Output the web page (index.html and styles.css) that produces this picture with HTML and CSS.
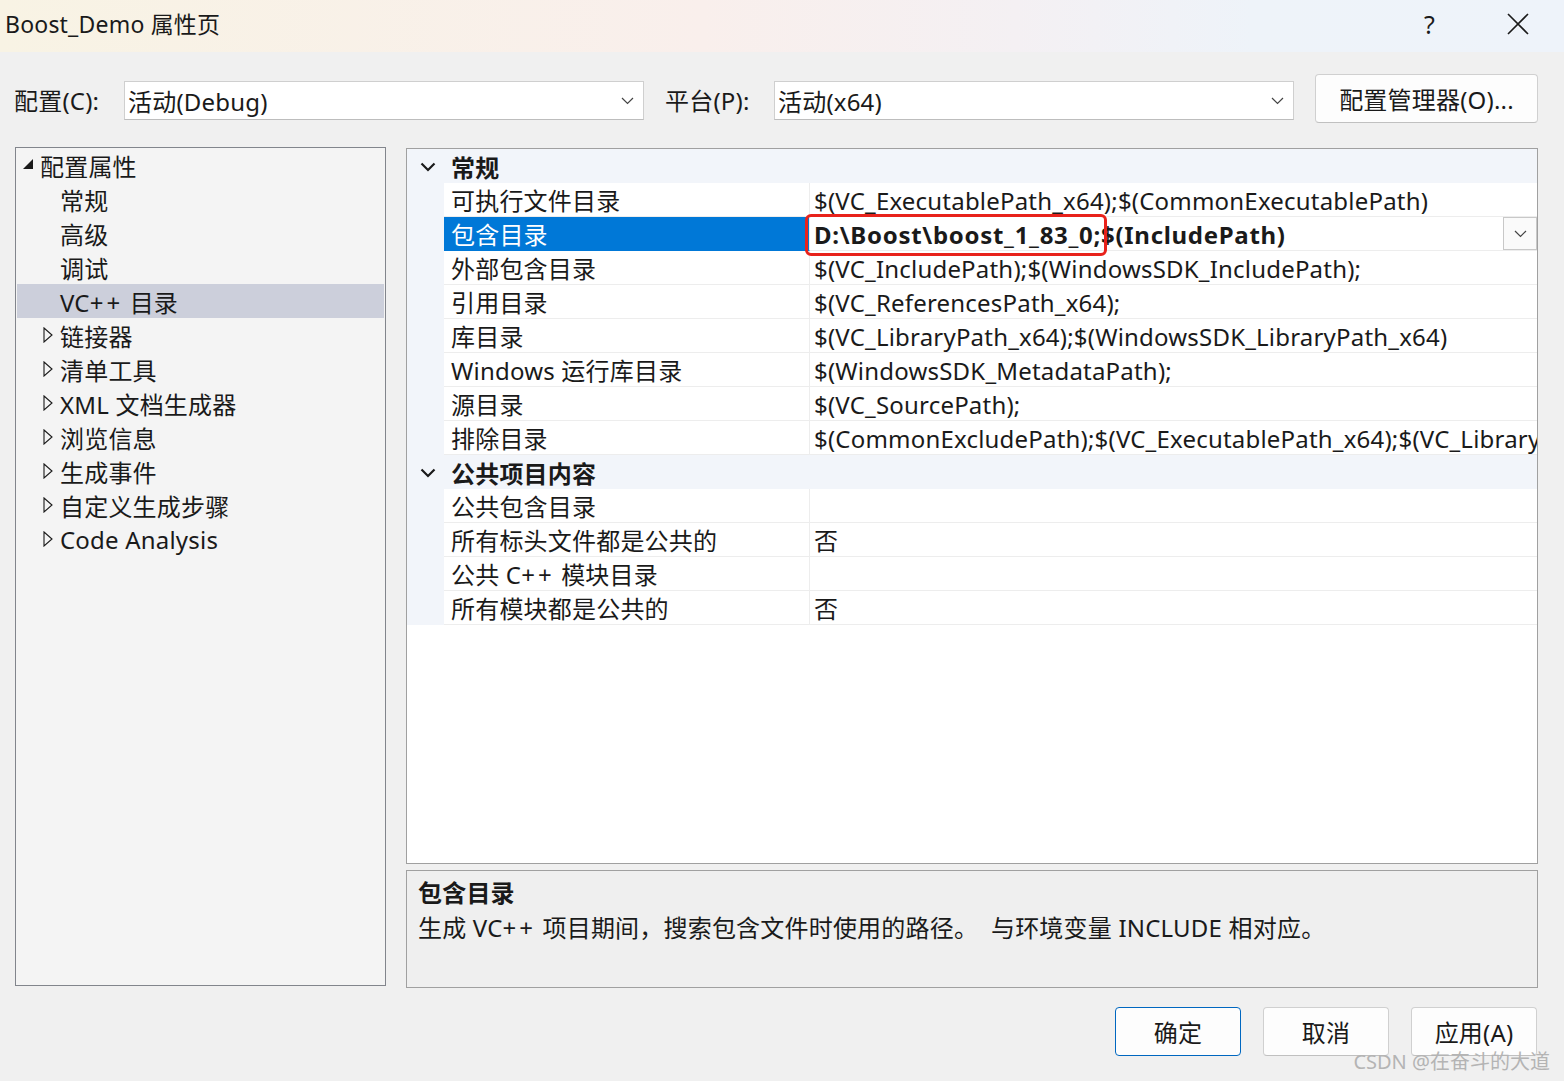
FILE: index.html
```html
<!DOCTYPE html>
<html lang="zh-CN">
<head>
<meta charset="utf-8">
<title>Boost_Demo 属性页</title>
<link rel="stylesheet" href="styles.css">
</head>
<body>
<div class="window">
  <header class="titlebar">
    <div class="title">Boost_Demo 属性页</div>
    <div class="title-actions">
      <span class="help">?</span>
      <svg class="close" width="22" height="22" viewBox="0 0 22 22"><path d="M1 1L21 21M21 1L1 21" stroke="#1a1a1a" stroke-width="1.6" fill="none"/></svg>
    </div>
  </header>

  <div class="toolbar">
    <label class="tb-label">配置(C):</label>
    <div class="combo combo-config">
      <span class="combo-text">活动(Debug)</span>
      <svg class="chev" width="13" height="8" viewBox="0 0 13 8"><path d="M1 1L6.5 6.5L12 1" stroke="#444" stroke-width="1.2" fill="none"/></svg>
    </div>
    <label class="tb-label tb-label2">平台(P):</label>
    <div class="combo combo-platform">
      <span class="combo-text">活动(x64)</span>
      <svg class="chev" width="13" height="8" viewBox="0 0 13 8"><path d="M1 1L6.5 6.5L12 1" stroke="#444" stroke-width="1.2" fill="none"/></svg>
    </div>
    <button class="btn btn-mgr">配置管理器(O)...</button>
  </div>

  <div class="main">
    <nav class="tree">
      <div class="tree-row root">
        <svg class="tri-open" width="12" height="12" viewBox="0 0 12 12"><path d="M11 1L11 11L1 11Z" fill="#1a1a1a"/></svg>
        <span>配置属性</span>
      </div>
      <div class="tree-row child"><span>常规</span></div>
      <div class="tree-row child"><span>高级</span></div>
      <div class="tree-row child"><span>调试</span></div>
      <div class="tree-row child selected"><span>VC<span class="pp">++</span> 目录</span></div>
      <div class="tree-row child"><svg class="tri" width="10" height="16" viewBox="0 0 10 16"><path d="M1 1L9 8L1 15Z" fill="none" stroke="#1a1a1a" stroke-width="1.1"/></svg><span>链接器</span></div>
      <div class="tree-row child"><svg class="tri" width="10" height="16" viewBox="0 0 10 16"><path d="M1 1L9 8L1 15Z" fill="none" stroke="#1a1a1a" stroke-width="1.1"/></svg><span>清单工具</span></div>
      <div class="tree-row child"><svg class="tri" width="10" height="16" viewBox="0 0 10 16"><path d="M1 1L9 8L1 15Z" fill="none" stroke="#1a1a1a" stroke-width="1.1"/></svg><span>XML 文档生成器</span></div>
      <div class="tree-row child"><svg class="tri" width="10" height="16" viewBox="0 0 10 16"><path d="M1 1L9 8L1 15Z" fill="none" stroke="#1a1a1a" stroke-width="1.1"/></svg><span>浏览信息</span></div>
      <div class="tree-row child"><svg class="tri" width="10" height="16" viewBox="0 0 10 16"><path d="M1 1L9 8L1 15Z" fill="none" stroke="#1a1a1a" stroke-width="1.1"/></svg><span>生成事件</span></div>
      <div class="tree-row child"><svg class="tri" width="10" height="16" viewBox="0 0 10 16"><path d="M1 1L9 8L1 15Z" fill="none" stroke="#1a1a1a" stroke-width="1.1"/></svg><span>自定义生成步骤</span></div>
      <div class="tree-row child"><svg class="tri" width="10" height="16" viewBox="0 0 10 16"><path d="M1 1L9 8L1 15Z" fill="none" stroke="#1a1a1a" stroke-width="1.1"/></svg><span>Code Analysis</span></div>
    </nav>

    <section class="right">
      <div class="grid">
        <div class="cat">
          <svg class="cat-chev" width="16" height="10" viewBox="0 0 16 10"><path d="M1.5 1.5L8 8L14.5 1.5" stroke="#1a1a1a" stroke-width="2.2" fill="none"/></svg>
          <span>常规</span>
        </div>
        <div class="prow"><div class="pl">可执行文件目录</div><div class="pv">$(VC_ExecutablePath_x64);$(CommonExecutablePath)</div></div>
        <div class="prow sel">
          <div class="pl">包含目录</div>
          <div class="pv bold"><span class="mark">D:\Boost\boost_1_83_0;</span>$(IncludePath)</div>
          <div class="dd-btn"><svg width="13" height="8" viewBox="0 0 13 8"><path d="M1 1L6.5 6.5L12 1" stroke="#444" stroke-width="1.2" fill="none"/></svg></div>
        </div>
        <div class="prow"><div class="pl">外部包含目录</div><div class="pv">$(VC_IncludePath);$(WindowsSDK_IncludePath);</div></div>
        <div class="prow"><div class="pl">引用目录</div><div class="pv">$(VC_ReferencesPath_x64);</div></div>
        <div class="prow"><div class="pl">库目录</div><div class="pv">$(VC_LibraryPath_x64);$(WindowsSDK_LibraryPath_x64)</div></div>
        <div class="prow"><div class="pl">Windows 运行库目录</div><div class="pv">$(WindowsSDK_MetadataPath);</div></div>
        <div class="prow"><div class="pl">源目录</div><div class="pv">$(VC_SourcePath);</div></div>
        <div class="prow"><div class="pl">排除目录</div><div class="pv clip">$(CommonExcludePath);$(VC_ExecutablePath_x64);$(VC_Library</div></div>
        <div class="cat">
          <svg class="cat-chev" width="16" height="10" viewBox="0 0 16 10"><path d="M1.5 1.5L8 8L14.5 1.5" stroke="#1a1a1a" stroke-width="2.2" fill="none"/></svg>
          <span>公共项目内容</span>
        </div>
        <div class="prow"><div class="pl">公共包含目录</div><div class="pv"></div></div>
        <div class="prow"><div class="pl">所有标头文件都是公共的</div><div class="pv">否</div></div>
        <div class="prow"><div class="pl">公共 C<span class="pp">++</span> 模块目录</div><div class="pv"></div></div>
        <div class="prow"><div class="pl">所有模块都是公共的</div><div class="pv">否</div></div>
      </div>
      <div class="desc">
        <div class="desc-title">包含目录</div>
        <div class="desc-text">生成 VC<span class="pp">++</span> 项目期间，搜索包含文件时使用的路径。&nbsp; 与环境变量 INCLUDE 相对应。</div>
      </div>
    </section>
  </div>

  <footer class="footer">
    <button class="btn btn-foot primary">确定</button>
    <button class="btn btn-foot">取消</button>
    <button class="btn btn-foot">应用(A)</button>
    <div class="watermark">CSDN @在奋斗的大道</div>
  </footer>
</div>
</body>
</html>
```

FILE: styles.css
```css
* { box-sizing: border-box; }
html, body { margin: 0; padding: 0; }
body {
  width: 1564px;
  height: 1081px;
  overflow: hidden;
  background: #f0f0f0;
  font-family: "Noto Sans", "Noto Sans CJK SC", sans-serif;
  color: #1a1a1a;
  letter-spacing: 0.2px;
}
.window {
  position: relative;
  width: 1564px;
  height: 1081px;
  display: flex;
  flex-direction: column;
}
.titlebar {
  height: 52px;
  flex: none;
  display: flex;
  align-items: center;
  justify-content: space-between;
  padding-left: 5px;
  background: linear-gradient(90deg, #f8f3e4 0%, #f9efec 45%, #f4f0f3 65%, #eef3f9 80%, #eef3fa 100%);
}
.title {
  font-size: 23px;
  line-height: 1;
  margin-top: -4px;
}
.title-actions {
  display: flex;
  align-items: center;
  margin-top: -4px;
}
.help {
  font-size: 25px;
  margin-right: 72px;
}
.close { margin-right: 35px; }

.pp { letter-spacing: 3px; }

.toolbar {
  height: 95px;
  flex: none;
  display: flex;
  align-items: flex-start;
  padding-top: 22px;
  padding-left: 14px;
}
.tb-label {
  font-size: 24px;
  line-height: 39px;
  margin-top: 7px;
  width: 110px;
}
.tb-label2 {
  width: 109px;
  margin-left: 21px;
}
.combo {
  margin-top: 7px;
  height: 39px;
  width: 520px;
  background: #fff;
  border: 1px solid #cfcfcf;
  border-bottom-color: #bdbdbd;
  display: flex;
  align-items: center;
  justify-content: space-between;
  padding: 0 9px 0 3px;
}
.combo-text { font-size: 24px; }
.btn {
  font-family: inherit;
  letter-spacing: 0.2px;
  color: #1a1a1a;
  background: #fdfdfd;
  border: 1px solid #d0d0d0;
  border-bottom-color: #c0c0c0;
  border-radius: 4px;
}
.btn-mgr {
  margin-left: 21px;
  width: 223px;
  height: 49px;
  font-size: 24px;
  padding: 0;
}

.main {
  display: flex;
  padding-left: 15px;
  height: 841px;
  flex: none;
}
.tree {
  width: 371px;
  height: 839px;
  background: #f4f4f4;
  border: 1px solid #82858c;
  padding-top: 0;
  padding-left: 1px;
  padding-right: 1px;
}
.tree-row {
  height: 34px;
  display: flex;
  align-items: center;
  font-size: 24px;
  white-space: nowrap;
}
.tree-row.root { padding-left: 5px; }
.tree-row.root .tri-open { margin-right: 6px; margin-top: -2px; }
.tree-row.child { padding-left: 43px; }
.tree-row.child .tri { margin-left: -17px; margin-right: 7px; }
.tree-row.selected { background: #cccfdb; }

.right {
  margin-left: 20px;
  width: 1132px;
  display: flex;
  flex-direction: column;
  padding-top: 1px;
}
.grid {
  height: 716px;
  background: #fff;
  border: 1px solid #a0a0a0;
  overflow: hidden;
}
.cat {
  height: 34px;
  background: #f2f5fa;
  display: flex;
  align-items: center;
  font-size: 24px;
  font-weight: 700;
  padding-left: 13px;
}
.cat-chev { margin-right: 15px; margin-top: 2px; }
.prow {
  position: relative;
  height: 34px;
  display: flex;
  padding-left: 37px;
  background: #f2f5fa;
}
.pl, .pv {
  height: 34px;
  line-height: 35px;
  font-size: 24px;
  white-space: nowrap;
  background: #fff;
  border-bottom: 1px solid #ededed;
}
.pl {
  width: 366px;
  padding-left: 7px;
  border-right: 1px solid #ededed;
  overflow: hidden;
}
.pv {
  flex: 1;
  padding-left: 4px;
  min-width: 0;
}
.pv.clip { overflow: hidden; }
.pv.bold { font-weight: 700; letter-spacing: 0.7px; }
.prow.sel .pl {
  background: #0078d7;
  color: #fff;
  border-bottom-color: #0078d7;
}
.mark {
  position: relative;
}
.mark::after {
  content: "";
  position: absolute;
  left: -9px;
  right: -6px;
  top: -4px;
  bottom: -5px;
  border: 3.5px solid #e8221b;
  border-radius: 6px;
  z-index: 3;
}
.dd-btn {
  position: absolute;
  right: 0;
  top: 0;
  width: 34px;
  height: 33px;
  border: 1px solid #c8c8c8;
  background: #fafafa;
  display: flex;
  align-items: center;
  justify-content: center;
}
.desc {
  margin-top: 6px;
  height: 118px;
  background: #efefef;
  border: 1px solid #a0a0a0;
  padding: 6px 11px;
}
.desc-title {
  font-size: 24px;
  font-weight: 700;
  line-height: 32px;
}
.desc-text {
  font-size: 24px;
  line-height: 38px;
  white-space: nowrap;
}

.footer {
  position: relative;
  display: flex;
  justify-content: flex-end;
  gap: 22px;
  padding-right: 27px;
  padding-top: 19px;
}
.btn-foot {
  width: 126px;
  height: 49px;
  font-size: 24px;
  padding: 0;
}
.btn-foot.primary {
  border: 1px solid #0067c0;
}
.watermark {
  position: absolute;
  right: 14px;
  top: 58px;
  font-size: 20px;
  color: #b4b4b4;
  letter-spacing: 0;
  white-space: nowrap;
}
```
